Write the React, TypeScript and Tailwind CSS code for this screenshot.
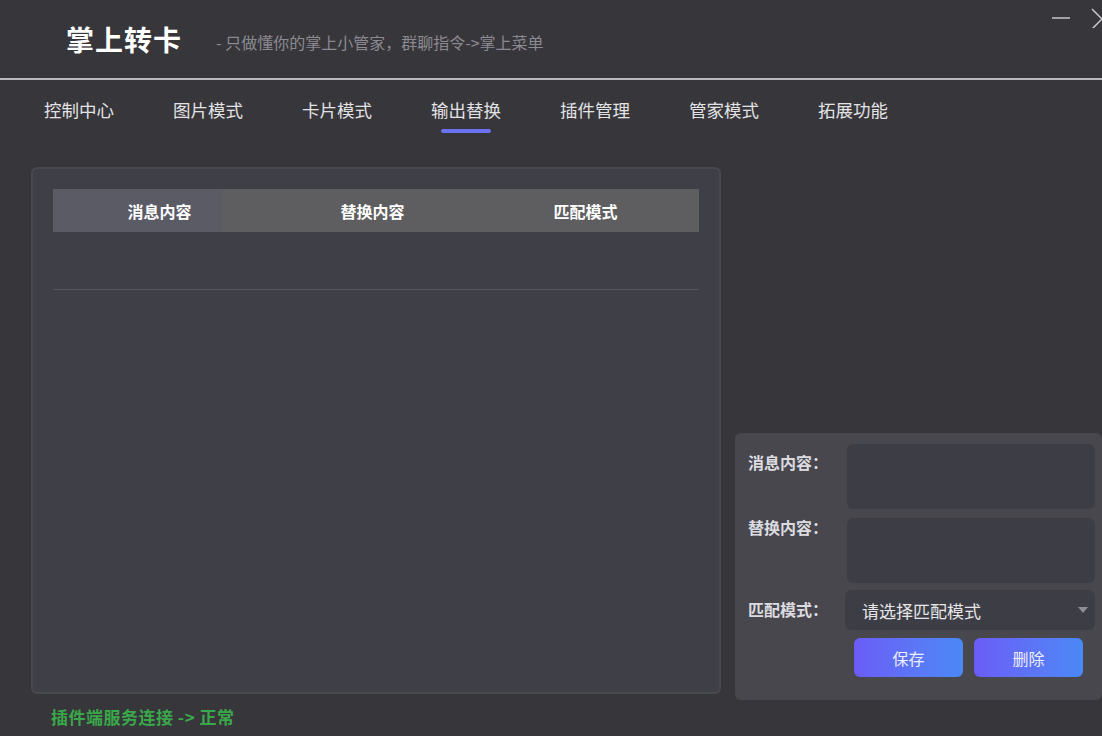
import React from 'react';

const tabs = ['控制中心', '图片模式', '卡片模式', '输出替换', '插件管理', '管家模式', '拓展功能'];

export default function App() {
  return (
    <div
      className="w-[1102px] h-[736px] bg-[#37363b] text-white overflow-hidden flex flex-col"
      style={{ fontFamily: '"Noto Sans CJK SC", "Noto Sans", sans-serif' }}
    >
      {/* header */}
      <div className="h-[80px] shrink-0 flex items-center border-b-2 border-[#b9b9bc] relative">
        <h1 className="ml-[66px] text-[28px] font-bold leading-none tracking-[1px]">掌上转卡</h1>
        <span className="ml-[34px] mt-[6px] text-[16px] text-[#8b8a90]">- 只做懂你的掌上小管家，群聊指令-&gt;掌上菜单</span>
        {/* window controls */}
        <div className="absolute right-0 top-[6px] flex items-center gap-[20px]">
          <svg width="20" height="20" viewBox="0 0 20 20">
            <line x1="1" y1="11" x2="19" y2="11" stroke="#c9c9cc" strokeWidth="1.5" />
          </svg>
          <svg width="11" height="22" viewBox="0 0 11 22">
            <line x1="1" y1="3" x2="11" y2="13" stroke="#c9c9cc" strokeWidth="1.5" />
            <line x1="1" y1="23" x2="11" y2="13" stroke="#c9c9cc" strokeWidth="1.5" />
          </svg>
        </div>
      </div>

      {/* nav tabs */}
      <div className="flex shrink-0 pl-[44px] gap-[59px] pt-[17px] h-[87px]">
        {tabs.map((t) => (
          <div key={t} className="flex flex-col items-center w-[70px]">
            <span className="text-[17.5px] text-[#e3e3e5] leading-[26px] whitespace-nowrap">{t}</span>
            {t === '输出替换' && <div className="mt-[6px] w-[50px] h-[4px] rounded-full bg-[#6b72f0]" />}
          </div>
        ))}
      </div>

      {/* body */}
      <div className="flex flex-1">
        <div className="flex flex-col">
          {/* table panel */}
          <div className="ml-[31px] w-[690px] h-[527px] rounded-[6px] bg-[#3f3f47] border-2 border-[#48484e] pt-[20px] px-[20px]">
            <div className="grid grid-cols-[213px_213px_213px] h-[43px] bg-[linear-gradient(90deg,#5b5b66_0,#5b5b66_169px,#5e5e61_169px)] text-[16px] font-bold items-center text-center">
              <div>消息内容</div>
              <div>替换内容</div>
              <div>匹配模式</div>
            </div>
            <div className="h-[58px] border-b border-[#55555c]" />
          </div>
          <div className="ml-[51px] mt-[10px] text-[17px] font-bold tracking-[0.5px] text-[#3aa84a] whitespace-pre">插件端服务连接 -&gt; 正常</div>
        </div>

        {/* edit panel */}
        <div className="ml-[14px] mt-[266px] w-[380px] h-[267px] rounded-[6px] bg-[#47474d] pt-[11px] pl-[13px] pr-[7px]">
          <div className="flex">
            <span className="w-[99px] pt-[6px] text-[16px] font-bold text-[#dcdce0]">消息内容：</span>
            <div className="w-[248px] h-[65px] rounded-[6px] bg-[#3d3d45]" />
          </div>
          <div className="flex mt-[9px]">
            <span className="w-[99px] -mt-[3px] text-[16px] font-bold text-[#dcdce0]">替换内容：</span>
            <div className="w-[248px] h-[65px] rounded-[6px] bg-[#3d3d45]" />
          </div>
          <div className="flex mt-[7px] items-center">
            <span className="w-[97px] -mt-[3px] text-[16px] font-bold text-[#dcdce0]">匹配模式：</span>
            <div className="w-[250px] h-[40px] rounded-[6px] bg-[#3d3d45] flex items-center pl-[17px] pr-[6px] justify-between">
              <span className="text-[17px] text-[#e6e6e8] mt-[1px]">请选择匹配模式</span>
              <svg width="12" height="8" viewBox="0 0 12 8">
                <path d="M1 1 L11 1 L6 7 Z" fill="#8e8e94" />
              </svg>
            </div>
          </div>
          <div className="flex gap-[11px] ml-[106px] mt-[8px]">
            <button className="w-[109px] h-[39px] rounded-[6px] bg-gradient-to-r from-[#6a5cf6] to-[#4a88f6] text-[16px] text-[#eef0ff]">保存</button>
            <button className="w-[109px] h-[39px] rounded-[6px] bg-gradient-to-r from-[#6a5cf6] to-[#4a88f6] text-[16px] text-[#eef0ff]">删除</button>
          </div>
        </div>
      </div>
    </div>
  );
}
